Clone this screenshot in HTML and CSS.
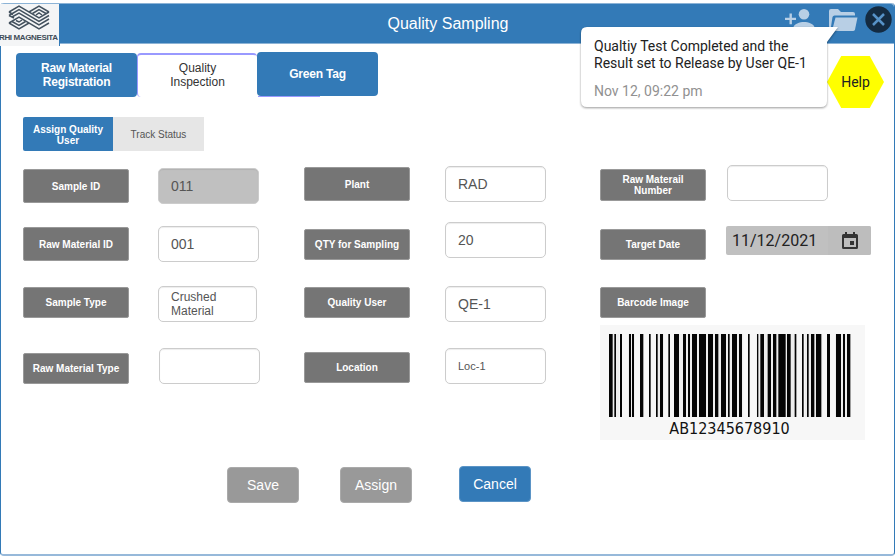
FILE: index.html
```html
<!DOCTYPE html>
<html lang="en">
<head>
<meta charset="utf-8">
<title>Quality Sampling</title>
<link rel="stylesheet" href="styles.css">
</head>
<body>
<div class="window">
  <header class="header">
    <div class="logo">
      <svg width="42" height="25" viewBox="0 0 42 25" fill="none" stroke="#43515e" stroke-width="1.5">
        <path d="M1 7 11 1 31 13 41 7M1 10.500 11 4.500 31 16.500 41 10.500M4 12 11 8 31 20 41 14M1 18 11 12 31 24 41 18"/>
        <path d="M21 7 31 1 41 7M24.500 8.500 31 4.500 38 8.500M28 10 31 8 34 10"/>
        <path d="M1 18 11 24 21 18M4 16.500 11 20.500 17.500 16.500M8 15.500 11 17 14 15M1 7 5 9.500M1 10.500 6 13"/>
      </svg>
      <span class="logo-name">RHI MAGNESITA</span>
    </div>
    <h1 class="title">Quality Sampling</h1>
    <div class="actions">
      <svg class="person" width="30" height="21" viewBox="0 0 30 21" fill="#b8cfe5">
        <circle cx="19" cy="5.300" r="5.300"/>
        <path d="M8.500 21v-2.500c0-3.500 6.500-5.500 10.500-5.500s10.500 2 10.500 5.500V21zM4.500 4.500h2.400V8.700H11V11H6.900v4.200H4.500V11H0V8.700h4.500z"/>
      </svg>
      <svg class="folder" width="29" height="23" viewBox="0 0 29 23" fill="#b8cfe5">
        <path d="M0 20V2Q0 0 2 0h7l3 3h12q2 0 2 2v1.500H5.500Q4 6.500 3.500 8L1.500 21Q0 21 0 20z"/>
        <path d="M6.500 8.500H28.500L26 20.500Q25.500 22 24 22H3z"/>
      </svg>
      <svg class="close" width="27" height="27" viewBox="0 0 27 27">
        <circle cx="13.500" cy="13.500" r="13.200" fill="#142b41"/>
        <path d="M8 8 19 19M19 8 8 19" stroke="#5792c7" stroke-width="2.500"/>
      </svg>
    </div>
  </header>

  <nav class="tabs">
    <div class="tab tab-registration">Raw Material<br>Registration</div>
    <div class="tab tab-current">Quality<br>Inspection</div>
    <div class="tab tab-green">Green Tag</div>
  </nav>

  <nav class="subtabs">
    <div class="subtab subtab-active">Assign Quality<br>User</div>
    <div class="subtab">Track Status</div>
  </nav>

  <main class="form">
    <section class="col">
      <div class="row r1"><div class="label tall d4">Sample ID</div><div class="field disabled d3">011</div></div>
      <div class="row r2"><div class="label tall d5">Raw Material ID</div><div class="field d4">001</div></div>
      <div class="row r3"><div class="label d1">Sample Type</div><div class="field narrow two-line">Crushed<br>Material</div></div>
      <div class="row r4"><div class="label d5">Raw Material Type</div><div class="field shifted"></div></div>
    </section>
    <section class="col col-second">
      <div class="row r1"><div class="label tall d2">Plant</div><div class="field d1">RAD</div></div>
      <div class="row r2"><div class="label d7">QTY for Sampling</div><div class="field">20</div></div>
      <div class="row r3"><div class="label d1">Quality User</div><div class="field">QE-1</div></div>
      <div class="row r4"><div class="label d4">Location</div><div class="field small">Loc-1</div></div>
    </section>
    <section class="col col-third">
      <div class="row r1"><div class="label medium d4">Raw Materail<br>Number</div><div class="field"></div></div>
      <div class="row r2"><div class="label d7">Target Date</div>
        <div class="date d4"><span class="date-text">11/12/2021</span><span class="date-button">
          <svg width="16" height="18" viewBox="0 0 16 18"><path fill="#333" fill-rule="evenodd" d="M3 0h2v2h6V0h2v2h1.500Q16 2 16 3.500v12q0 1.500-1.500 1.500h-13Q0 17 0 15.500v-12Q0 2 1.500 2H3zM2 6v9h12V6zM8 9h4v4H8z"/></svg>
        </span></div>
      </div>
      <div class="row r3"><div class="label d1">Barcode Image</div></div>
      <div class="barcode">
        <svg width="265" height="92" viewBox="15 15 795 276">
          <path fill="#dedede" d="M42 42h30v249H42zM99 42h20v249H99zM183 42h24v249h-24zM237 42h208v249H237zM484 42h121v249H484zM630 42h52v249h-52zM720 42h48v249h-48z" opacity=".35"/>
          <path fill="#050505" d="M42 42h11v249H42zM58 42h5v249h-5zM75 42h6v249h-6zM102 42h6v249h-6zM111 42h6v249h-6zM135 42h10v249h-10zM162 42h5v249h-5zM183 42h5v249h-5zM195 42h9v249h-9zM220 42h5v249h-5zM237 42h15v249h-15zM264 42h9v249h-9zM279 42h6v249h-6zM291 42h15v249h-15zM312 42h21v249h-21zM339 42h15v249h-15zM360 42h10v249h-10zM378 42h15v249h-15zM399 42h5v249h-5zM411 42h15v249h-15zM432 42h9v249h-9zM459 42h5v249h-5zM486 42h4v249h-4zM496 42h11v249h-11zM518 42h10v249h-10zM534 42h10v249h-10zM550 42h22v249h-22zM576 42h11v249h-11zM599 42h5v249h-5zM621 42h5v249h-5zM636 42h5v249h-5zM648 42h10v249h-10zM663 42h16v249h-16zM696 42h9v249h-9zM723 42h15v249h-15zM744 42h6v249h-6zM756 42h10v249h-10z"/>
        </svg>
        <div class="barcode-text">AB12345678910</div>
      </div>
    </section>
  </main>

  <footer class="buttons">
    <div class="button">Save</div>
    <div class="button">Assign</div>
    <div class="button primary">Cancel</div>
  </footer>

  <div class="help">Help</div>
  <div class="toast">
    <svg class="toast-shape" width="262" height="90" viewBox="0 0 262 90"><path d="M6 3H259L248 18V77Q248 83 242 83H8Q2 83 2 77V9Q2 3 8 3Z" fill="#fff"/></svg>
    <div class="toast-body">
      <div>Qualtiy Test Completed and the<br>Result set to Release by User QE-1</div>
      <div class="toast-time">Nov 12, 09:22 pm</div>
    </div>
  </div>
</div>
</body>
</html>
```
FILE: styles.css
```css
* { box-sizing: border-box; }
body { margin: 0; background: #fff; font-family: "Liberation Sans", Arial, sans-serif; overflow: hidden; }
.window { position: relative; width: 895px; height: 553px; margin-top: 3px; border: 1px solid #337ab7; border-bottom: 2px solid #97b9da; border-top: 0; border-radius: 4px; }

.header { display: flex; width: 893px; height: 41px; background: #337ab7; border-top: 1px solid #8cb3d6; border-bottom: 1px solid #8cb3d6; border-radius: 4px 4px 0 0; }
.logo { width: 59px; height: 42px; margin: 0 1px 0 -1px; padding: 1px 0 0 8px; background: #f4f5f6; flex: none; box-shadow: 1px 0 0 #337ab7; }
.logo svg { display: block; }
.logo-name { display: block; width: 60px; margin: 3px 0 0 -9px; font: bold 8px/9px "Liberation Sans", Arial, sans-serif; color: #3f4c58; white-space: nowrap; letter-spacing: -.37px; }
.title { flex: none; width: 776px; margin: 0; color: #fff; font-size: 16px; font-weight: 400; line-height: 39px; text-align: center; }
.actions { display: flex; width: 108px; margin-left: -51px; }
.person { flex: none; margin: 5px 14px 0 0; }
.folder { flex: none; margin: 5px 7px 0 0; }
.close { flex: none; margin-top: 2px; }

.tabs { display: flex; height: 45px; margin: 8px 0 0 15px; }
.tab { display: flex; align-items: center; justify-content: center; width: 121px; height: 44px; border-radius: 4px; background: #337ab7; color: #fff; font-size: 12px; font-weight: 700; line-height: 14px; letter-spacing: -.2px; text-align: center; }
.tab-registration { margin-top: 1px; }
.tab-current { width: 120px; height: 44px; margin-top: 1px; padding-bottom: 3px; background: #fff; color: #333; border: 2px solid #9999ff; border-width: 2px 0 0 1px; font-weight: 400; letter-spacing: 0; }
.tab-green { position: relative; }
.tab-green::after { content: ""; position: absolute; left: 1px; bottom: -1px; width: 62px; height: 1px; background: #9999ff; }

.subtabs { display: flex; margin: 20px 0 0 22px; height: 34px; }
.subtab { display: flex; align-items: center; justify-content: center; width: 91px; padding-top: 1px; background: #e6e6e6; color: #555; font-size: 10px; line-height: 11px; text-align: center; }
.subtab-active { width: 90px; background: #337ab7; color: #fff; font-weight: 700; border-radius: 2px 0 0 2px; }

.form { display: flex; margin: 14px 0 0 22px; height: 284px; }
.col { width: 281px; flex: none; }
.col-second { width: 296px; }
.row { display: flex; align-items: flex-start; }
.r1 { height: 57px; }
.r2 { height: 64px; }
.r3 { height: 62px; }
.label { display: flex; flex: none; align-items: center; justify-content: center; width: 106px; height: 31px; border: 1px solid #999; border-radius: 2px; background: #757575; color: #fff; font-size: 10px; font-weight: 700; line-height: 11px; text-align: center; }
.tall { height: 34px; }
.medium { height: 32px; }
.field { display: flex; flex: none; align-items: center; width: 101px; height: 36px; margin-left: 29px; padding-left: 12px; border: 1px solid #ccc; border-radius: 5px; background: #fff; box-shadow: inset 0 1px 1px rgba(0, 0, 0, .075); color: #555; font-size: 14px; line-height: 14px; }
.col-second .field { margin-left: 35px; }
.col-third .field { margin-left: 21px; }
.disabled { background: #c0c0c0; }
.narrow { width: 99px; }
.shifted { margin-left: 30px; }
.two-line { font-size: 12px; }
.small { font-size: 11px; }
.d1 { margin-top: 1px; }
.d2 { margin-top: 2px; }
.d3 { margin-top: 3px; }
.d4 { margin-top: 4px; }
.d5 { margin-top: 5px; }
.d7 { margin-top: 7px; }
.date { display: flex; width: 145px; height: 29px; margin-left: 20px; border-radius: 2px; background: #c0c0c0; color: #222; font: 16px/29px Roboto, sans-serif; }
.date-text { width: 102px; padding-left: 6px; }
.date-button { display: flex; flex: 1; align-items: center; justify-content: center; background: #bdbdbd; border-radius: 0 2px 2px 0; }
.barcode { width: 265px; height: 115px; margin-top: -23px; background: #f7f7f7; }
.barcode svg { display: block; }
.barcode-text { width: 259px; font: 16px/23px "DejaVu Sans Condensed", "DejaVu Sans", sans-serif; font-stretch: condensed; color: #111; text-align: center; }

.buttons { display: flex; gap: 41px; margin: 18px 0 0 226px; }
.button { width: 72px; height: 36px; border: 1px solid #aaa; border-radius: 4px; background: #999; color: #fff; font-size: 14px; line-height: 35px; text-align: center; }
.primary { margin: -1px 0 0 6px; background: #337ab7; border-color: #5b94c6; }

.help { position: absolute; left: 826px; top: 53px; width: 57px; height: 52px; background: #ff0; clip-path: polygon(25% 0, 75% 0, 100% 50%, 75% 100%, 25% 100%, 0 50%); font: 14px/53px Roboto, sans-serif; color: #222; text-align: center; }
.toast { position: absolute; left: 578px; top: 21px; width: 262px; height: 90px; }
.toast-shape { display: block; filter: drop-shadow(0 1px 1px rgba(0, 0, 0, .4)); }
.toast-body { position: absolute; left: 15px; top: 14px; width: 240px; font: 14px/17px Roboto, sans-serif; color: #222; white-space: nowrap; }
.toast-time { margin-top: 11px; color: #919191; }
```
